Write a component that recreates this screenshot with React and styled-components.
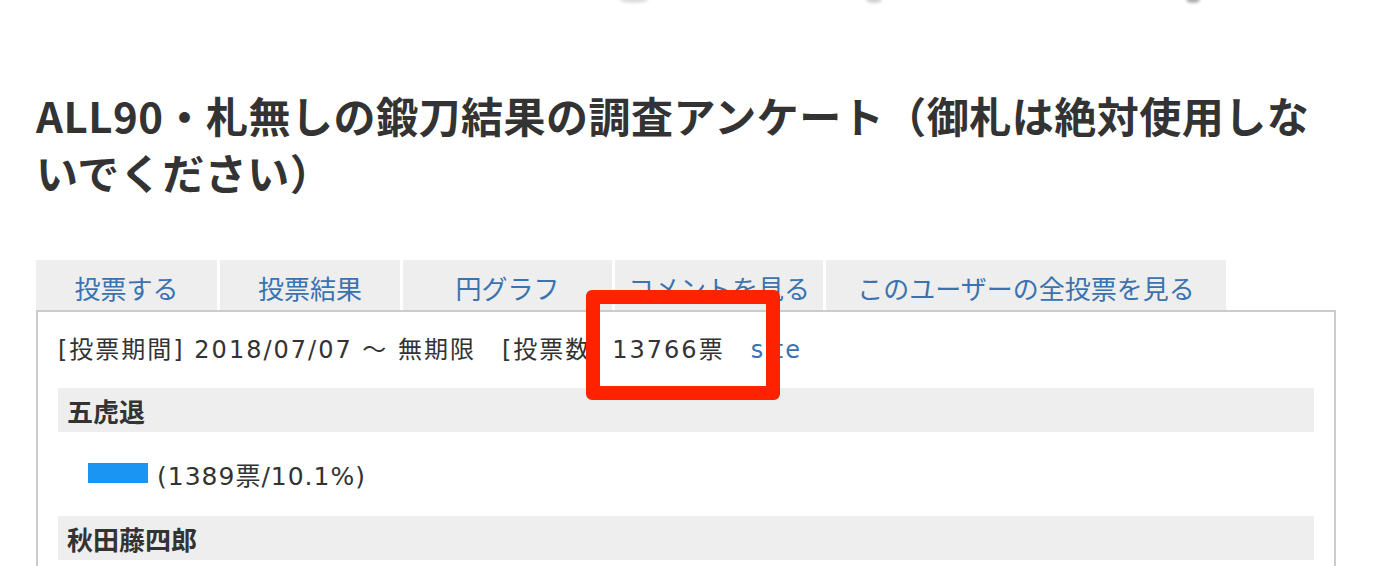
import React from "react";
import styled, { createGlobalStyle } from "styled-components";

const Global = createGlobalStyle`
  html, body { margin: 0; padding: 0; background: #fff; }
  body { font-family: "Noto Sans CJK JP", "Noto Sans", sans-serif; color: #333; }
`;

const Page = styled.div`
  position: relative;
  width: 1390px;
  height: 566px;
  overflow: hidden;
  padding: 0 0 0 36px;
  box-sizing: border-box;
`;

const Smudge = styled.div`
  position: absolute;
  top: -4px;
  width: ${(p) => p.w}px;
  height: 7px;
  border-radius: 50%;
  background: rgba(120, 120, 120, ${(p) => p.o});
  filter: blur(1.5px);
`;

const Title = styled.h1`
  margin: 0;
  padding-top: 86px;
  font-size: 42px;
  letter-spacing: 0.5px;
  line-height: 57px;
  font-weight: 700;
  color: #333;
  width: 1285px;
`;

const Tabs = styled.ul`
  list-style: none;
  margin: 60px 0 0;
  padding: 0;
  display: flex;
  gap: 3px;
`;

const Tab = styled.li`
  width: ${(p) => p.w}px;
  height: 50px;
  background: #eeeeee;
  display: flex;
  align-items: center;
  justify-content: center;
  color: #3a73b0;
  font-size: 26px;
  padding-top: 4px;
  box-sizing: border-box;
`;

const Box = styled.div`
  width: 1300px;
  box-sizing: border-box;
  border: 2px solid #cccccc;
  padding: 20px 20px 20px 20px;
`;

const Info = styled.div`
  font-family: "DejaVu Sans", "Noto Sans CJK JP", sans-serif;
  font-size: 24px;
  letter-spacing: 2px;
  line-height: 36px;
  height: 56px;
  color: #333;
  white-space: pre;
  display: flex;
  align-items: flex-start;
`;

const SiteLink = styled.a`
  color: #3a73b0;
  text-decoration: none;
`;

const ItemHead = styled.div`
  background: #eeeeee;
  height: 44px;
  display: flex;
  align-items: center;
  padding-left: 9px;
  font-size: 26px;
  font-weight: 700;
  color: #333;
`;

const Result = styled.div`
  height: 84px;
  display: flex;
  align-items: center;
  padding-left: 30px;
  gap: 9px;
  font-family: "DejaVu Sans", "Noto Sans CJK JP", sans-serif;
  font-size: 25px;
  letter-spacing: 1px;
  color: #333;
`;

const Bar = styled.span`
  display: inline-block;
  height: 20px;
  background: #1a95f4;
  margin-top: -2px;
`;

const Marker = styled.div`
  position: absolute;
  left: 586px;
  top: 290px;
  width: 194px;
  height: 110px;
  box-sizing: border-box;
  border: 14px solid #ff2200;
  border-radius: 6px;
`;

const tabs = [
  { label: "投票する", w: 181 },
  { label: "投票結果", w: 180 },
  { label: "円グラフ", w: 209 },
  { label: "コメントを見る", w: 208 },
  { label: "このユーザーの全投票を見る", w: 400 },
];

export default function App() {
  return (
    <Page>
      <Global />
      <Smudge style={{ left: 620 }} w={28} o={0.25} />
      <Smudge style={{ left: 866 }} w={16} o={0.35} />
      <Smudge style={{ left: 1186 }} w={14} o={0.6} />
      <Title>ALL90・札無しの鍛刀結果の調査アンケート（御札は絶対使用しないでください）</Title>
      <Tabs>
        {tabs.map((t) => (
          <Tab key={t.label} w={t.w}>
            {t.label}
          </Tab>
        ))}
      </Tabs>
      <Box>
        <Info>
          {"[投票期間] 2018/07/07 ～ 無期限　[投票数] 13766票　"}
          <SiteLink href="#">site</SiteLink>
        </Info>
        <ItemHead>五虎退</ItemHead>
        <Result>
          <Bar style={{ width: 60 }} />
          (1389票/10.1%)
        </Result>
        <ItemHead>秋田藤四郎</ItemHead>
        <Result>
          <Bar style={{ width: 60 }} />
          (1380票/10.0%)
        </Result>
      </Box>
      <Marker />
    </Page>
  );
}
